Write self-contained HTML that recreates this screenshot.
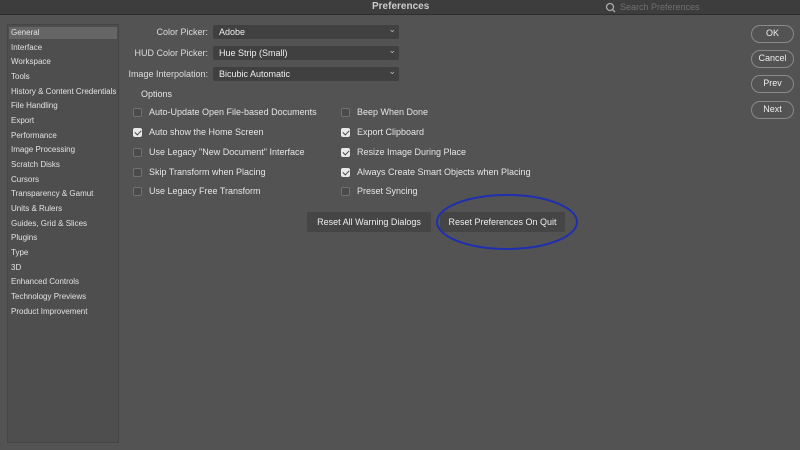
<!DOCTYPE html>
<html><head><style>
*{margin:0;padding:0;box-sizing:border-box}
body{width:800px;height:450px;background:#535353;font-family:"Liberation Sans",sans-serif;color:#e6e6e6;position:relative;overflow:hidden;font-size:9px}
.tb{position:absolute;left:0;top:0;width:800px;height:15px;background:#3d3d3d;border-bottom:1px solid #2e2e2e}
.a{position:absolute;white-space:nowrap}
.side{position:absolute;left:7px;top:24px;width:112px;height:419px;background:#4e4e4e;border:1px solid #454545}
.side div{position:absolute;left:3px;font-size:8px;color:#e2e2e2}
.sel{background:#656565;left:1px!important;width:108px;padding-left:2px;height:12px;line-height:12px}
.dd{position:absolute;left:213px;width:186px;height:14px;background:#404040;border-radius:2px;font-size:9px;line-height:14px;padding-left:6px;color:#eee}
.dd:after{content:"⌄";position:absolute;right:3px;top:-3px;font-size:9px;color:#bbb}
.lab{position:absolute;right:592px;font-size:9px;color:#ddd;white-space:nowrap}
.cb{position:absolute;width:9px;height:9px;border:1px solid #707070;border-radius:2px;background:#4a4a4a}
.cb.c{background:#e8e8e8;border-color:#e8e8e8}
.cb.c:after{content:"";position:absolute;left:2px;top:0px;width:3px;height:5px;border:solid #444;border-width:0 1.5px 1.5px 0;transform:rotate(45deg)}
.btn{position:absolute;background:#454545;border-radius:2px;height:20px;line-height:20px;text-align:center;font-size:9px;color:#eee}
.rb{position:absolute;left:751px;width:43px;height:18px;border:1.5px solid #8a8a8a;border-radius:9px;text-align:center;line-height:15px;font-size:9px;color:#eee;background:#535353}
</style></head><body>
<div class="tb"></div>
<div class="a" style="left:372px;top:1px;font-size:10px;font-weight:bold;color:#ccc">Preferences</div>
<svg class="a" style="left:605px;top:2px" width="12" height="12"><circle cx="5" cy="5" r="3.5" stroke="#aaa" stroke-width="1.3" fill="none"/><line x1="7.5" y1="7.5" x2="10" y2="10" stroke="#aaa" stroke-width="1.3"/></svg>
<div class="a" style="left:620px;top:2px;font-size:9px;color:#6f6f6f">Search Preferences</div>
<div class="side">
<div class="sel" style="top:2px">General</div>
<div style="top:18px">Interface</div>
<div style="top:32px">Workspace</div>
<div style="top:47px">Tools</div>
<div style="top:62px">History &amp; Content Credentials</div>
<div style="top:76px">File Handling</div>
<div style="top:91px">Export</div>
<div style="top:106px">Performance</div>
<div style="top:120px">Image Processing</div>
<div style="top:135px">Scratch Disks</div>
<div style="top:150px">Cursors</div>
<div style="top:164px">Transparency &amp; Gamut</div>
<div style="top:179px">Units &amp; Rulers</div>
<div style="top:194px">Guides, Grid &amp; Slices</div>
<div style="top:208px">Plugins</div>
<div style="top:223px">Type</div>
<div style="top:238px">3D</div>
<div style="top:252px">Enhanced Controls</div>
<div style="top:267px">Technology Previews</div>
<div style="top:282px">Product Improvement</div>
</div>
<div class="lab" style="top:27px">Color Picker:</div>
<div class="lab" style="top:48px">HUD Color Picker:</div>
<div class="lab" style="top:69px">Image Interpolation:</div>
<div class="dd" style="top:25px">Adobe</div>
<div class="dd" style="top:46px">Hue Strip (Small)</div>
<div class="dd" style="top:67px">Bicubic Automatic</div>
<div class="a" style="left:141px;top:89px">Options</div>
<div class="cb" style="left:133px;top:108px"></div><div class="a" style="left:149px;top:107px">Auto-Update Open File-based Documents</div>
<div class="cb c" style="left:133px;top:128px"></div><div class="a" style="left:149px;top:127px">Auto show the Home Screen</div>
<div class="cb" style="left:133px;top:148px"></div><div class="a" style="left:149px;top:147px">Use Legacy "New Document" Interface</div>
<div class="cb" style="left:133px;top:168px"></div><div class="a" style="left:149px;top:167px">Skip Transform when Placing</div>
<div class="cb" style="left:133px;top:187px"></div><div class="a" style="left:149px;top:186px">Use Legacy Free Transform</div>
<div class="cb" style="left:341px;top:108px"></div><div class="a" style="left:357px;top:107px">Beep When Done</div>
<div class="cb c" style="left:341px;top:128px"></div><div class="a" style="left:357px;top:127px">Export Clipboard</div>
<div class="cb c" style="left:341px;top:148px"></div><div class="a" style="left:357px;top:147px">Resize Image During Place</div>
<div class="cb c" style="left:341px;top:168px"></div><div class="a" style="left:357px;top:167px">Always Create Smart Objects when Placing</div>
<div class="cb" style="left:341px;top:187px"></div><div class="a" style="left:357px;top:186px">Preset Syncing</div>
<div class="btn" style="left:307px;top:212px;width:124px">Reset All Warning Dialogs</div>
<div class="btn" style="left:440px;top:212px;width:125px">Reset Preferences On Quit</div>
<svg class="a" style="left:0;top:0" width="800" height="450"><ellipse cx="507" cy="222" rx="70" ry="27" fill="none" stroke="#1e2fb0" stroke-width="2"/></svg>
<div class="rb" style="top:25px">OK</div>
<div class="rb" style="top:50px">Cancel</div>
<div class="rb" style="top:75px">Prev</div>
<div class="rb" style="top:101px">Next</div>
</body></html>
